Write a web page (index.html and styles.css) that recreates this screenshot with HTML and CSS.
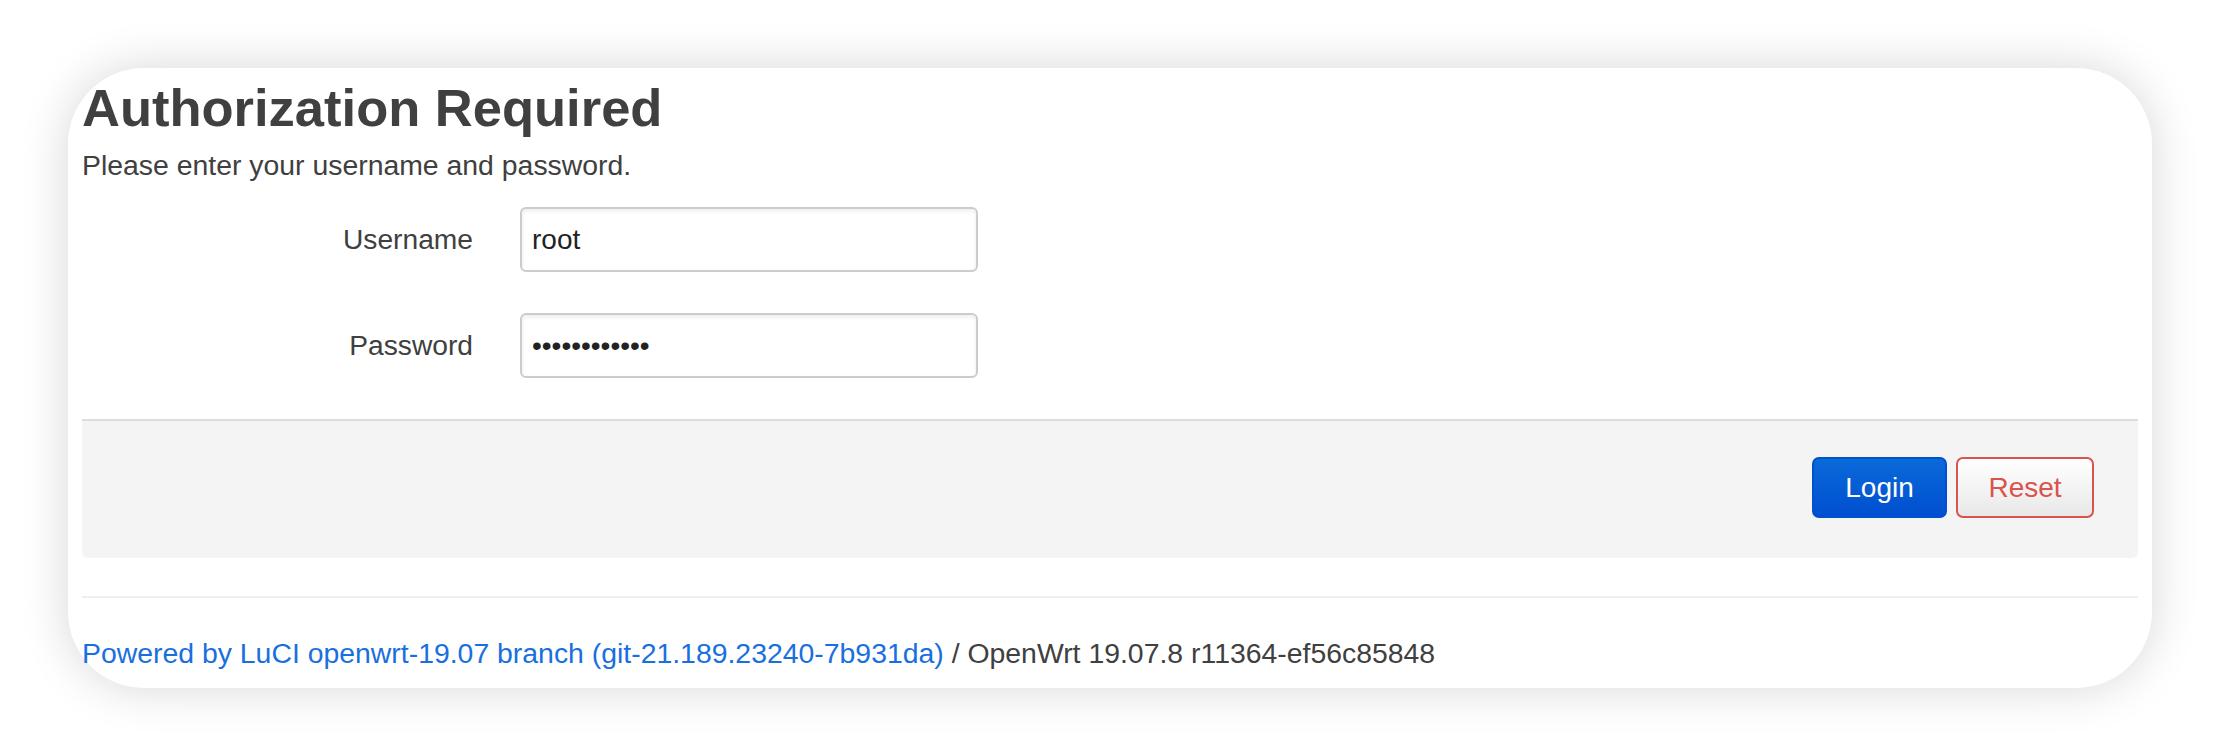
FILE: index.html
```html
<!DOCTYPE html>
<html lang="en">
  <head>
    <meta charset="UTF-8" />
    <meta name="viewport" content="width=device-width, initial-scale=1.0" />
    <title>OpenWrt - LuCI</title>
    <link rel="stylesheet" href="styles.css">
  </head>
  <body>
    <div class="card">
      <form class="login" onsubmit="return false">
        <h2>Authorization Required</h2>
        <p class="hint">Please enter your username and password.</p>

        <div class="fields">
          <div class="field-row">
            <label class="field-title" for="luci_username">Username</label>
            <input class="field-input" id="luci_username" type="text" value="root" />
          </div>
          <div class="field-row">
            <label class="field-title" for="luci_password">Password</label>
            <input class="field-input" id="luci_password" type="password" value="************" />
          </div>
        </div>

        <div class="page-actions">
          <button class="btn btn-primary" type="submit">Login</button>
          <button class="btn btn-reset" type="reset">Reset</button>
        </div>
      </form>

      <footer class="footer">
        <a href="#">Powered by LuCI openwrt-19.07 branch (git-21.189.23240-7b931da)</a>
        / OpenWrt 19.07.8 r11364-ef56c85848
      </footer>
    </div>
  </body>
</html>
```

FILE: styles.css
```css
html,
body {
  height: 100%;
}
body {
  font-family: "Liberation Sans", Arial, sans-serif;
  margin: 0;
  padding: 68px 68px 69px;
  box-sizing: border-box;
  background-color: #fff;
  color: #404040;
}
.card {
  background-color: white;
  border-radius: 76px;
  box-shadow: 0 0 48px rgba(0, 0, 0, 0.16);
  padding: 10px 14px 17px;
}
h2 {
  font-size: 52.5px;
  line-height: 60px;
  font-weight: bold;
  color: #404040;
  margin: 0;
}
.hint {
  font-size: 28.4px;
  line-height: 36px;
  margin: 9px 0 0;
}
.fields {
  display: flex;
  flex-direction: column;
  gap: 41px;
  margin-top: 24px;
}
.field-row {
  display: flex;
  align-items: center;
}
.field-title {
  width: 391px;
  margin-right: 47px;
  text-align: right;
  font-size: 28.2px;
}
.field-input {
  width: 458px;
  height: 65px;
  box-sizing: border-box;
  padding: 0 10px;
  font-family: "Liberation Sans", Arial, sans-serif;
  font-size: 28px;
  color: #222;
  border: 2px solid #ccc;
  border-radius: 6px;
  box-shadow: inset 0 2px 4px rgba(0, 0, 0, 0.08);
  outline: none;
}
.page-actions {
  margin-top: 41px;
  border-top: 2px solid #ddd;
  background-color: #f4f4f4;
  border-radius: 0 0 6px 6px;
  padding: 36px 44px 40px;
  display: flex;
  justify-content: flex-end;
  gap: 9px;
}
.btn {
  height: 61px;
  box-sizing: border-box;
  font-family: "Liberation Sans", Arial, sans-serif;
  font-size: 28px;
  border-radius: 7px;
  cursor: pointer;
}
.btn-primary {
  width: 135px;
  color: white;
  border: 2px solid #0052cc;
  background: linear-gradient(#0a6ad9, #004fd0);
}
.btn-reset {
  width: 138px;
  color: #d9534f;
  border: 2px solid #d9534f;
  background: linear-gradient(#fff, #e8e8e8);
}
.footer {
  margin-top: 38px;
  border-top: 2px solid #eee;
  padding-top: 37px;
  font-size: 28.4px;
  line-height: 36px;
  color: #404040;
}
.footer a {
  color: #1a6fe0;
  text-decoration: none;
}
```
